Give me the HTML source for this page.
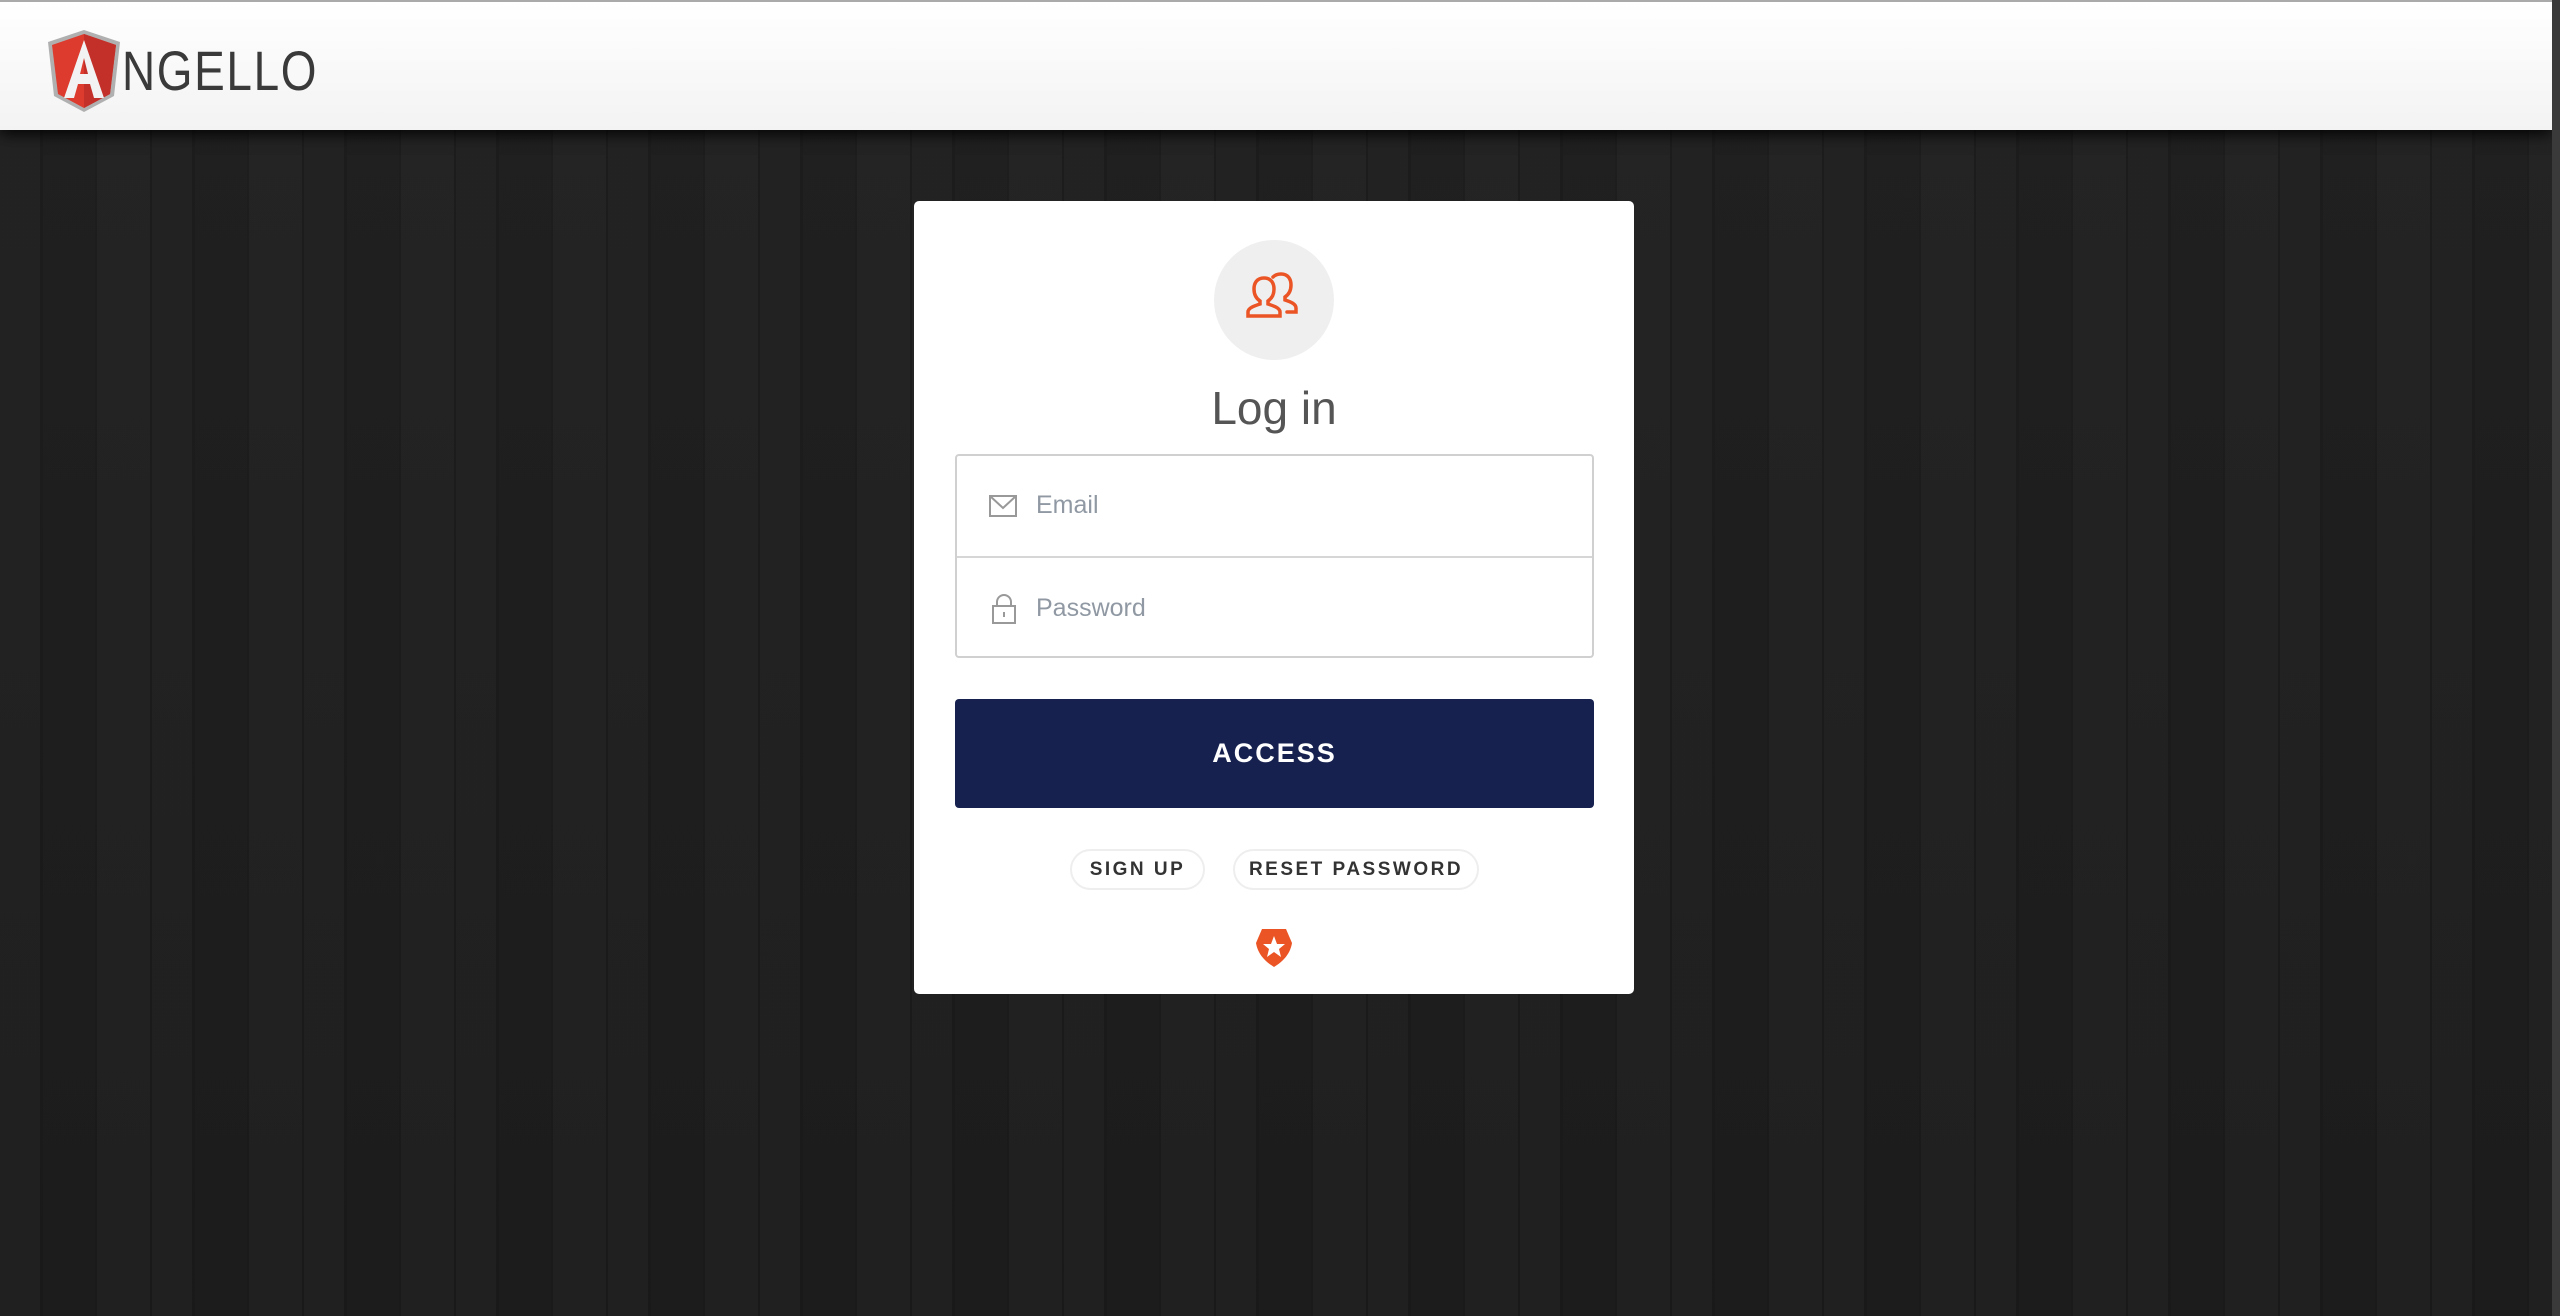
<!DOCTYPE html>
<html><head><meta charset="utf-8"><style>
html,body{margin:0;padding:0;width:2560px;height:1316px;overflow:hidden;font-family:"Liberation Sans",sans-serif;}
body{position:relative;background-color:#1d1d1d;
background-image:
repeating-linear-gradient(90deg, rgba(255,255,255,0.015) 0 40px, rgba(0,0,0,0.1) 40px 43px, rgba(255,255,255,0.0) 43px 95px, rgba(0,0,0,0.08) 95px 97px, rgba(255,255,255,0.02) 97px 150px, rgba(0,0,0,0.1) 150px 152px),
linear-gradient(180deg,#202020,#1c1c1c);}
.hdr{position:absolute;left:0;top:0;width:2552px;height:130px;background:linear-gradient(#fff,#f3f3f3);border-top:2px solid #aaa;box-sizing:border-box;box-shadow:0 4px 14px rgba(0,0,0,0.9);}
.sb{position:absolute;right:0;top:0;width:8px;height:1316px;background:#3a3a3a;}
.card{position:absolute;left:914px;top:201px;width:720px;height:793px;background:#fff;border-radius:5px;}
.av{position:absolute;left:300px;top:39px;width:120px;height:120px;border-radius:50%;background:#efefef;}
h1{position:absolute;left:0;width:720px;top:180px;margin:0;text-align:center;font-weight:normal;font-size:46px;color:#555;}
.inp{position:absolute;left:41px;top:253px;width:639px;height:204px;border:2px solid #d0d0d0;border-radius:4px;box-sizing:border-box;}
.inp .div{position:absolute;left:0;right:0;top:100px;height:2px;background:#d6d6d6;}
.ph{position:absolute;left:79px;font-size:25px;color:#9099a3;}
.btn{position:absolute;left:41px;top:498px;width:639px;height:109px;background:#16214f;border-radius:4px;color:#fff;font-weight:bold;font-size:27px;letter-spacing:2px;text-align:center;line-height:109px;}
.pill{position:absolute;top:648px;height:41px;border:2px solid #eee;border-radius:22px;box-sizing:border-box;font-size:19px;font-weight:bold;letter-spacing:2.5px;color:#333;text-align:center;line-height:37px;}
</style></head><body>
<div class="hdr">
<svg style="position:absolute;left:44px;top:26px" width="80" height="86" viewBox="0 0 80 86">
<path d="M40 2 L76 14 L70 68 L40 84 L10 68 L4 14 Z" fill="#b0b0b0"/>
<path d="M40 6 L72 17 L66 66 L40 80 L14 66 L8 17 Z" fill="#dd3b2e"/>
<path d="M40 6 L72 17 L66 66 L40 80 Z" fill="#c3302a"/>
<path d="M40 12 L20 70 L30 70 L34 56 L46 56 L50 70 L60 70 Z M40 30 L44 46 L36 46 Z" fill="#f2f2f2" fill-rule="evenodd"/>
</svg>
<div style="position:absolute;left:122px;top:36px;font-size:56px;color:#3a3a3a;font-family:'Liberation Sans',sans-serif;letter-spacing:2px;transform:scaleX(0.82);transform-origin:left;">NGELLO</div>
</div>
<div class="sb"></div>
<div class="card">
<div class="av"><svg style="position:absolute;left:30px;top:32px" width="60" height="50" viewBox="0 0 60 50" fill="none" stroke="#eb5424" stroke-width="3.5" stroke-linecap="round">
<path d="M20 6 c-7 0 -10 5 -10 11 c0 6 3 10 6 12 l0 3 c-6 2 -12 4 -12 8 l0 4 h32 M20 6 c7 0 10 5 10 11 c0 6 -3 10 -6 12 l0 3 c6 2 12 4 12 8 l0 4 h-12"/>
<path d="M29 5 c2 -2 5 -3 8 -3 c7 0 10 5 10 11 c0 6 -3 10 -6 12 l0 3 c6 2 11 4 11 8 l0 4 h-9"/>
</svg></div>
<h1>Log in</h1>
<div class="inp">
<svg style="position:absolute;left:32px;top:39px" width="28" height="22" viewBox="0 0 28 22" fill="none" stroke="#999" stroke-width="2"><rect x="1" y="1" width="26" height="20"/><path d="M1 1 L14 13 L27 1"/></svg>
<div class="ph" style="top:35px">Email</div>
<div class="div"></div>
<svg style="position:absolute;left:35px;top:138px" width="24" height="30" viewBox="0 0 24 30" fill="none" stroke="#999" stroke-width="2"><rect x="1" y="12" width="22" height="17"/><path d="M5 12 V8 a7 7 0 0 1 14 0 V12"/><path d="M12 18 v5"/></svg>
<div class="ph" style="top:138px">Password</div>
</div>
<div class="btn">ACCESS</div>
<div class="pill" style="left:156px;width:135px">SIGN UP</div>
<div class="pill" style="left:319px;width:246px">RESET PASSWORD</div>
<svg style="position:absolute;left:342px;top:728px" width="36" height="38" viewBox="0 0 36 38">
<path d="M6 0 H30 L36 14 C34 26 26 33 18 38 C10 33 2 26 0 14 Z" fill="#eb5424"/>
<path d="M18 7 L21 15 L29 15 L23 20 L25 28 L18 23 L11 28 L13 20 L7 15 L15 15 Z" fill="#fff"/>
</svg>
</div>
</body></html>
